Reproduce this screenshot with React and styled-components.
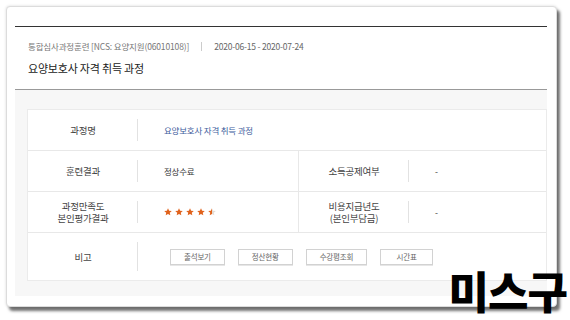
import React from "react";
import styled, { createGlobalStyle } from "styled-components";

const font = `"Noto Sans CJK KR", "Noto Sans", sans-serif`;

const GlobalStyle = createGlobalStyle`
  html, body {
    margin: 0;
    padding: 0;
    background: #fff;
    font-family: ${font};
  }
`;

const Page = styled.div`
  position: relative;
  width: 570px;
  height: 320px;
  padding: 6px 0 0 6px;
  box-sizing: border-box;
  overflow: hidden;
`;

const Card = styled.div`
  width: 551px;
  height: 301px;
  box-sizing: border-box;
  padding: 19px 9px 12px 8px;
  background: #fff;
  border: 1px solid #dcdcdc;
  border-radius: 4px;
  box-shadow: 0 0 3px rgba(0, 0, 0, 0.15), 3px 4px 3px rgba(0, 0, 0, 0.55);
  display: flex;
  flex-direction: column;
`;

const Header = styled.div`
  border-top: 1px solid #333;
  border-bottom: 1px solid #999;
  padding: 0 13px 14px;
`;

const Meta = styled.div`
  margin-top: 13px;
  display: flex;
  align-items: center;
  line-height: 12px;
  font-size: 8.5px;
  color: #777;
`;

const Category = styled.span`
  letter-spacing: -0.15px;
`;

const Sep = styled.span`
  width: 1px;
  height: 9px;
  background: #ccc;
  margin: 0 12px;
`;

const Period = styled.span`
  letter-spacing: -0.2px;
  color: #666;
`;

const Title = styled.h2`
  margin: 9px 0 0;
  font-size: 11px;
  font-weight: 400;
  letter-spacing: -0.2px;
  line-height: 14px;
  color: #222;
`;

const Panel = styled.div`
  flex: 1;
  background: #f7f7f7;
  padding: 19px 0 15px 12px;
`;

const Table = styled.div`
  background: #fff;
  border: 1px solid #ebebeb;
  display: grid;
  grid-template-columns: 110px 160px 111px 1fr;
  grid-template-rows: 41px 41px 41px 47px;
`;

const Label = styled.div`
  position: relative;
  display: flex;
  align-items: center;
  justify-content: center;
  text-align: center;
  font-size: 9.5px;
  line-height: 12px;
  letter-spacing: -0.2px;
  color: #444;
  border-bottom: ${(p) => (p.last ? "none" : "1px solid #e8e8e8")};
  border-left: ${(p) => (p.side ? "1px solid #e8e8e8" : "none")};

  &::after {
    content: "";
    position: absolute;
    right: 0;
    top: 9px;
    bottom: 9px;
    width: 1px;
    background: #e2e2e2;
  }
`;

const Value = styled.div`
  display: flex;
  align-items: center;
  gap: ${(p) => (p.buttons ? "13px" : "0")};
  padding-left: ${(p) => (p.buttons ? "32px" : "26px")};
  grid-column: ${(p) => (p.wide ? "2 / 5" : "auto")};
  font-size: 8.5px;
  letter-spacing: -0.2px;
  color: ${(p) => (p.link ? "#3d5c9c" : "#333")};
  border-bottom: ${(p) => (p.last ? "none" : "1px solid #e8e8e8")};
`;

const Button = styled.button`
  height: 16px;
  min-width: 53px;
  padding: 0 13px;
  background: #fff;
  border: 1px solid #d2d2d2;
  box-shadow: 0 1px 0 #e6e6e6;
  font-family: ${font};
  font-size: 7.5px;
  letter-spacing: -0.2px;
  color: #666;
  cursor: pointer;
`;

const Stars = styled.div`
  display: flex;
  gap: 3px;
`;

const Watermark = styled.div`
  position: absolute;
  right: 3px;
  top: 268px;
  font-family: ${font};
  font-size: 44px;
  font-weight: 900;
  line-height: 1;
  letter-spacing: -1px;
  color: #000;
`;

const STAR = "5,0.3 6.4,3.3 9.7,3.6 7.2,5.8 7.9,9.1 5,7.4 2.1,9.1 2.8,5.8 0.3,3.6 3.6,3.3";

const Star = ({ fill }) => (
  <svg width="8" height="8" viewBox="0 0 10 10">
    <defs>
      <linearGradient id="half">
        <stop offset="55%" stopColor="#e0621c" />
        <stop offset="55%" stopColor="#e4dcd4" />
      </linearGradient>
    </defs>
    <polygon points={STAR} fill={fill === "half" ? "url(#half)" : "#e0621c"} />
  </svg>
);

const Rating = ({ value }) => {
  const items = [];
  for (let i = 1; i <= 5; i++) {
    items.push(<Star key={i} fill={value >= i ? "full" : "half"} />);
  }
  return <Stars>{items}</Stars>;
};

const buttons = ["출석보기", "정산현황", "수강평조회", "시간표"];

export default function App() {
  return (
    <Page>
      <GlobalStyle />
      <Card>
        <Header>
          <Meta>
            <Category>통합심사과정훈련 [NCS: 요양지원(06010108)]</Category>
            <Sep />
            <Period>2020-06-15 - 2020-07-24</Period>
          </Meta>
          <Title>요양보호사 자격 취득 과정</Title>
        </Header>
        <Panel>
          <Table>
            <Label>과정명</Label>
            <Value wide link>요양보호사 자격 취득 과정</Value>

            <Label>훈련결과</Label>
            <Value>정상수료</Value>
            <Label side>소득공제여부</Label>
            <Value>-</Value>

            <Label>
              과정만족도
              <br />
              본인평가결과
            </Label>
            <Value>
              <Rating value={4.5} />
            </Value>
            <Label side>
              비용지급년도
              <br />
              (본인부담금)
            </Label>
            <Value>-</Value>

            <Label last>비고</Label>
            <Value wide last buttons>
              {buttons.map((b) => (
                <Button key={b}>{b}</Button>
              ))}
            </Value>
          </Table>
        </Panel>
      </Card>
      <Watermark>미스구</Watermark>
    </Page>
  );
}
